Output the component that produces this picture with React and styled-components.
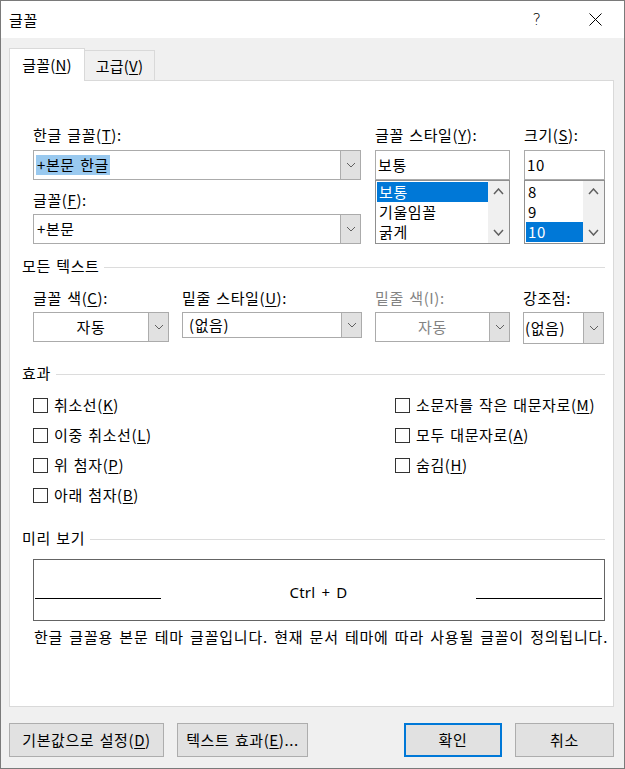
import React from "react";
import styled, { createGlobalStyle } from "styled-components";

const GlobalStyle = createGlobalStyle`
  html, body {
    margin: 0;
    padding: 0;
    background: #fff;
  }
  body {
    font-family: "Noto Sans CJK KR", "Noto Sans", sans-serif;
    font-size: 15px;
    letter-spacing: 0.6px;
    word-spacing: 1.5px;
    color: #000;
  }
  * {
    box-sizing: border-box;
  }
  u {
    text-decoration-thickness: 1px;
    text-underline-offset: 2px;
  }
`;

const Window = styled.div`
  width: 625px;
  height: 769px;
  border: 1px solid #7a7a7a;
  background: #f0f0f0;
  display: flex;
  flex-direction: column;
`;

const TitleBar = styled.div`
  height: 37px;
  background: #fff;
  display: flex;
  align-items: center;
  padding-left: 8px;
`;

const Title = styled.div`
  flex: 1;
  line-height: 20px;
`;

const TitleButton = styled.div`
  width: 58px;
  height: 37px;
  display: flex;
  align-items: center;
  justify-content: center;
  font-size: 16px;
  font-family: "DejaVu Sans", sans-serif;
  font-weight: 300;
`;

const Body = styled.div`
  flex: 1;
  padding: 10px 10px 0 8px;
  display: flex;
  flex-direction: column;
`;

const Tabs = styled.div`
  height: 32px;
  display: flex;
  align-items: flex-end;
`;

const Tab = styled.div`
  position: relative;
  width: ${p => p.$active ? 76 : 70}px;
  height: ${p => p.$active ? 33 : 30}px;
  margin-bottom: ${p => p.$active ? -1 : 0}px;
  z-index: ${p => p.$active ? 2 : 1};
  background: ${p => p.$active ? "#fff" : "#f0f0f0"};
  border: 1px solid #d9d9d9;
  border-bottom: none;
  border-left: ${p => p.$active ? "1px solid #d9d9d9" : "none"};
  display: flex;
  align-items: center;
  justify-content: center;
  line-height: 20px;
  letter-spacing: 0.2px;
`;

const Panel = styled.div`
  height: 627px;
  background: #fff;
  border: 1px solid #d9d9d9;
  padding: 44px 8px 0 23px;
  display: flex;
  flex-direction: column;
`;

const TopGrid = styled.div`
  display: grid;
  grid-template-columns: 328px 135px 81px;
  column-gap: 14px;
`;

const Column = styled.div`
  display: flex;
  flex-direction: column;
`;

const Label = styled.div`
  height: 20px;
  line-height: 20px;
  white-space: nowrap;
  margin-top: ${p => p.$mt || 0}px;
  margin-bottom: ${p => p.$mb ?? 5}px;
  color: ${p => p.$disabled ? "#838383" : "#000"};
`;

const Combo = styled.div`
  display: flex;
  height: ${p => p.$h || 30}px;
  border: 1px solid #ababab;
  background: #fff;
`;

const ComboText = styled.div`
  flex: 1;
  display: flex;
  align-items: center;
  justify-content: ${p => p.$center ? "center" : "flex-start"};
  padding-left: ${p => p.$center ? 0 : p.$pl ?? 2}px;
  color: ${p => p.$disabled ? "#838383" : "#000"};
  white-space: nowrap;
  line-height: 20px;
`;

const Selected = styled.span`
  background: #99c9ef;
  padding: 0 1px;
  line-height: 20px;
`;

const DropButton = styled.div`
  width: 20px;
  background: #e1e1e1;
  border-left: 1px solid #adadad;
  display: flex;
  align-items: center;
  justify-content: center;
`;

const TextBox = styled.div`
  height: 30px;
  border: 1px solid #ababab;
  background: #fff;
  display: flex;
  align-items: center;
  padding-left: 2px;
  line-height: 20px;
`;

const ListBox = styled.div`
  height: 64px;
  border: 1px solid #8f8f8f;
  background: #fff;
  display: flex;
  padding: 1px 0 1px 1px;
`;

const ListItems = styled.div`
  flex: 1;
  display: flex;
  flex-direction: column;
`;

const ListItem = styled.div`
  height: 20px;
  line-height: 20px;
  padding-left: 2px;
  background: ${p => p.$selected ? "#0078d7" : "transparent"};
  color: ${p => p.$selected ? "#fff" : "#000"};
  white-space: nowrap;
`;

const ScrollBar = styled.div`
  width: 21px;
  margin: -1px 0;
  background: #f0f0f0;
  display: flex;
  flex-direction: column;
  justify-content: space-between;
`;

const ScrollArrow = styled.div`
  height: 21px;
  display: flex;
  align-items: center;
  justify-content: center;
`;

const SectionHeading = styled.div`
  display: flex;
  align-items: center;
  height: 20px;
  line-height: 20px;
  margin-left: -11px;
  margin-top: ${p => p.$mt}px;
  gap: 5px;
  white-space: nowrap;
  &::after {
    content: "";
    flex: 1;
    border-top: 1px solid #dcdcdc;
    margin-top: 2px;
  }
`;

const ColorGrid = styled.div`
  display: grid;
  grid-template-columns: 136px 180px 135px 81px;
  column-gap: 13px;
  margin-top: 12px;
  align-items: start;
`;

const Effects = styled.div`
  display: grid;
  grid-template-columns: 362px 1fr;
  margin-top: 7px;
`;

const CheckRow = styled.label`
  height: 30px;
  display: flex;
  align-items: center;
  gap: 6px;
  white-space: nowrap;
  line-height: 20px;
`;

const CheckBox = styled.span`
  width: 15px;
  height: 15px;
  border: 1px solid #333;
  background: #fff;
  flex: none;
`;

const Preview = styled.div`
  margin-top: 11px;
  height: 62px;
  border: 1px solid #646464;
  display: flex;
  justify-content: space-between;
  align-items: flex-start;
  padding: 22px 2px 0 1px;
`;

const PreviewRule = styled.div`
  width: 126px;
  margin-top: 16px;
  border-top: 1px solid #000;
`;

const PreviewText = styled.div`
  line-height: 20px;
  font-family: "Noto Sans", sans-serif;
  font-size: 15px;
  letter-spacing: 0.2px;
  word-spacing: 2px;
`;

const Description = styled.div`
  margin-top: 6px;
  margin-left: 1px;
  line-height: 20px;
  letter-spacing: 0.8px;
  word-spacing: 2px;
  white-space: nowrap;
`;

const ButtonRow = styled.div`
  margin-top: 16px;
  display: flex;
`;

const Button = styled.div`
  width: ${p => p.$w}px;
  height: 34px;
  margin-left: ${p => p.$ml};
  background: #e1e1e1;
  border: ${p => p.$default ? "2px solid #0078d7" : "1px solid #adadad"};
  display: flex;
  align-items: center;
  justify-content: center;
  line-height: 20px;
  white-space: nowrap;
`;

const Chevron = ({ up, w = 8, h = 4 }) => (
  <svg width={w + 2} height={h + 2} viewBox={`-1 -1 ${w + 2} ${h + 2}`}>
    <polyline
      points={up ? `0,${h} ${w / 2},0 ${w},${h}` : `0,0 ${w / 2},${h} ${w},0`}
      fill="none"
      stroke="#606060"
      strokeWidth={up || w > 8 ? 1.5 : 1}
    />
  </svg>
);

const Drop = () => (
  <DropButton>
    <Chevron />
  </DropButton>
);

const Scroll = () => (
  <ScrollBar>
    <ScrollArrow><Chevron up w={9} h={5} /></ScrollArrow>
    <ScrollArrow><Chevron w={9} h={5} /></ScrollArrow>
  </ScrollBar>
);

const Check = ({ children }) => (
  <CheckRow>
    <CheckBox />
    <span>{children}</span>
  </CheckRow>
);

export default function App() {
  return (
    <>
      <GlobalStyle />
      <Window>
        <TitleBar>
          <Title>글꼴</Title>
          <TitleButton>?</TitleButton>
          <TitleButton>
            <svg width="13" height="13" viewBox="0 0 13 13">
              <path d="M0.5 0.5 L12.5 12.5 M12.5 0.5 L0.5 12.5" stroke="#000" strokeWidth="1" />
            </svg>
          </TitleButton>
        </TitleBar>
        <Body>
          <Tabs>
            <Tab $active>글꼴(<u>N</u>)</Tab>
            <Tab>고급(<u>V</u>)</Tab>
          </Tabs>
          <Panel>
            <TopGrid>
              <Column>
                <Label>한글 글꼴(<u>T</u>):</Label>
                <Combo>
                  <ComboText><Selected>+본문 한글</Selected></ComboText>
                  <Drop />
                </Combo>
                <Label $mt={10} $mb={4}>글꼴(<u>F</u>):</Label>
                <Combo>
                  <ComboText $pl={3}>+본문</ComboText>
                  <Drop />
                </Combo>
              </Column>
              <Column>
                <Label>글꼴 스타일(<u>Y</u>):</Label>
                <TextBox>보통</TextBox>
                <ListBox>
                  <ListItems>
                    <ListItem $selected>보통</ListItem>
                    <ListItem>기울임꼴</ListItem>
                    <ListItem>굵게</ListItem>
                  </ListItems>
                  <Scroll />
                </ListBox>
              </Column>
              <Column>
                <Label>크기(<u>S</u>):</Label>
                <TextBox>10</TextBox>
                <ListBox>
                  <ListItems>
                    <ListItem>8</ListItem>
                    <ListItem>9</ListItem>
                    <ListItem $selected>10</ListItem>
                  </ListItems>
                  <Scroll />
                </ListBox>
              </Column>
            </TopGrid>

            <SectionHeading $mt={12}>모든 텍스트</SectionHeading>
            <ColorGrid>
              <Column>
                <Label $mb={4}>글꼴 색(<u>C</u>):</Label>
                <Combo>
                  <ComboText $center>자동</ComboText>
                  <Drop />
                </Combo>
              </Column>
              <Column>
                <Label $mb={4}>밑줄 스타일(<u>U</u>):</Label>
                <Combo $h={26}>
                  <ComboText $pl={6}>(없음)</ComboText>
                  <Drop />
                </Combo>
              </Column>
              <Column>
                <Label $mb={4} $disabled>밑줄 색(I):</Label>
                <Combo>
                  <ComboText $center $disabled>자동</ComboText>
                  <Drop />
                </Combo>
              </Column>
              <Column>
                <Label $mb={4}>강조점:</Label>
                <Combo $h={32}>
                  <ComboText $pl={1}>(없음)</ComboText>
                  <Drop />
                </Combo>
              </Column>
            </ColorGrid>

            <SectionHeading $mt={19}>효과</SectionHeading>
            <Effects>
              <Column>
                <Check>취소선(<u>K</u>)</Check>
                <Check>이중 취소선(<u>L</u>)</Check>
                <Check>위 첨자(<u>P</u>)</Check>
                <Check>아래 첨자(<u>B</u>)</Check>
              </Column>
              <Column>
                <Check>소문자를 작은 대문자로(<u>M</u>)</Check>
                <Check>모두 대문자로(<u>A</u>)</Check>
                <Check>숨김(<u>H</u>)</Check>
              </Column>
            </Effects>

            <SectionHeading $mt={18}>미리 보기</SectionHeading>
            <Preview>
              <PreviewRule />
              <PreviewText>Ctrl + D</PreviewText>
              <PreviewRule />
            </Preview>
            <Description>
              한글 글꼴용 본문 테마 글꼴입니다. 현재 문서 테마에 따라 사용될 글꼴이 정의됩니다.
            </Description>
          </Panel>
          <ButtonRow>
            <Button $w={155}>기본값으로 설정(<u>D</u>)</Button>
            <Button $w={131} $ml="13px">텍스트 효과(<u>E</u>)...</Button>
            <Button $w={98} $ml="auto" $default>확인</Button>
            <Button $w={99} $ml="13px">취소</Button>
          </ButtonRow>
        </Body>
      </Window>
    </>
  );
}
